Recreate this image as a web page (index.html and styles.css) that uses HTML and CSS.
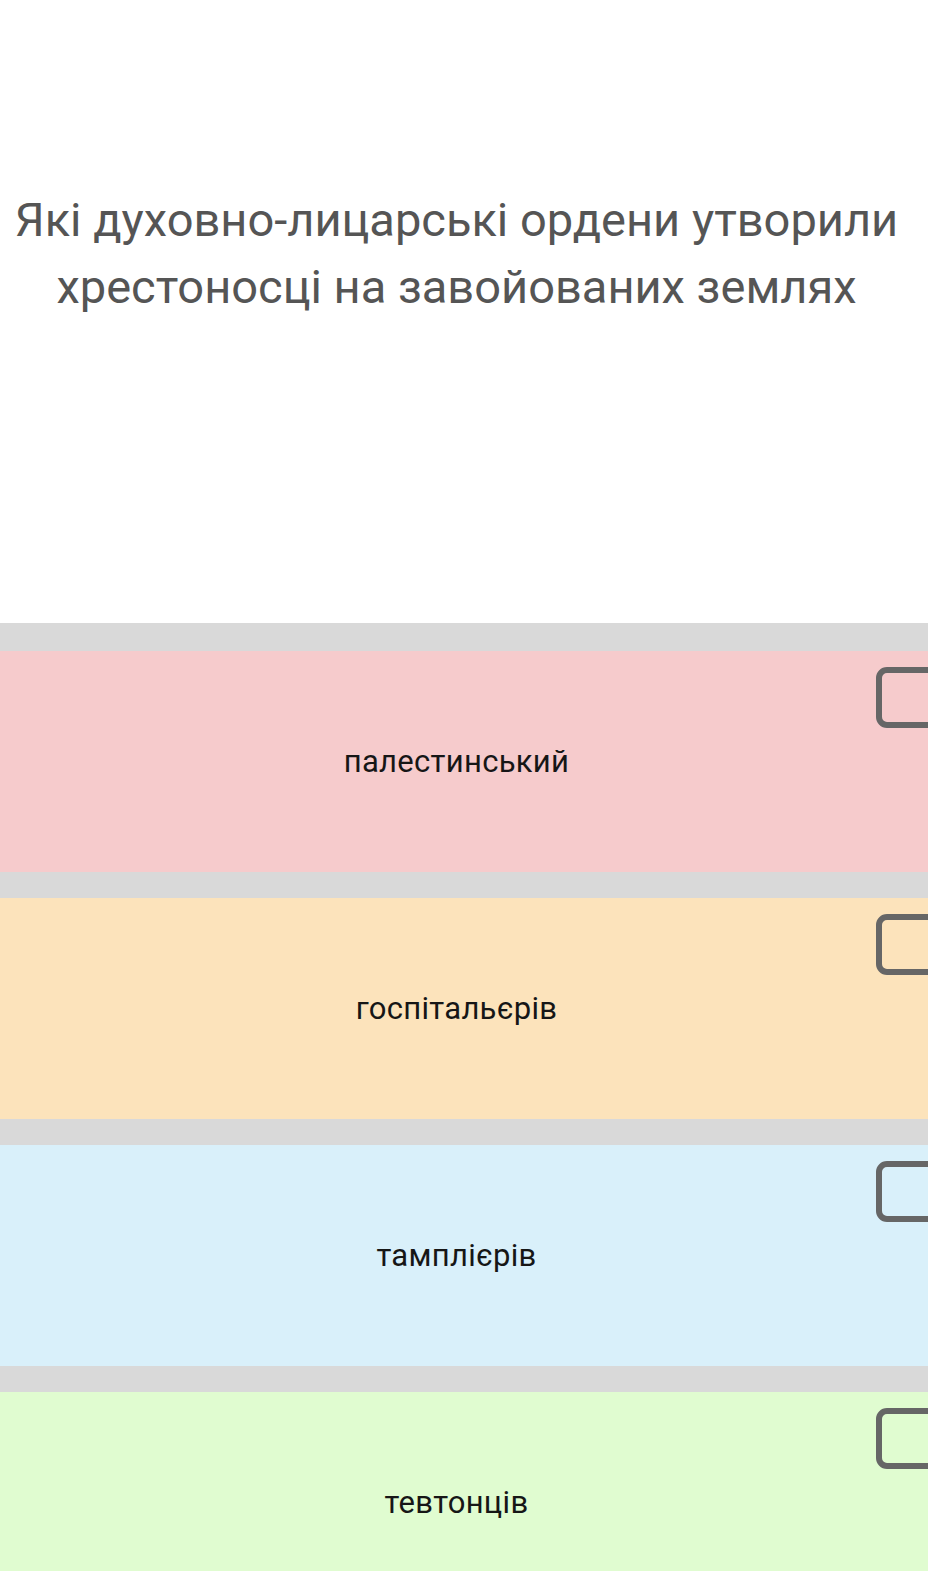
FILE: index.html
```html
<!DOCTYPE html>
<html lang="uk">

<head>
    <meta charset="UTF-8">
    <meta name="viewport" content="width=device-width, initial-scale=1.0">
    <title>Тест</title>
    <link rel="stylesheet" href="styles.css">
</head>

<body>
    <div class="question">
        <h1 class="question_title">Які духовно-лицарські ордени утворили хрестоносці на завойованих землях</h1>
    </div>
    <div class="answers">
        <div class="answer answer--red">
            <span class="answer_check"></span>
            <span class="answer_text">палестинський</span>
        </div>
        <div class="answer answer--orange">
            <span class="answer_check"></span>
            <span class="answer_text">госпітальєрів</span>
        </div>
        <div class="answer answer--blue">
            <span class="answer_check"></span>
            <span class="answer_text">тамплієрів</span>
        </div>
        <div class="answer answer--green">
            <span class="answer_check"></span>
            <span class="answer_text">тевтонців</span>
        </div>
    </div>
</body>

</html>
```

FILE: styles.css
```css
/* Reset some default browser styles */
body,
html {
    margin: 0;
    padding: 0;
    font-family: Roboto, 'Noto Sans', sans-serif;
    background-color: #ffffff;
    overflow: hidden;
}

.question {
    height: 623px;
    box-sizing: border-box;
    padding-top: 186px;
}

.question_title {
    margin: 0;
    padding: 0 15px 0 0;
    font-size: 47px;
    font-weight: 400;
    line-height: 67px;
    text-align: center;
    color: #555555;
}

.answers {
    display: flex;
    flex-direction: column;
    gap: 26px;
    padding-top: 28px;
    background-color: #d9d9d9;
}

.answer {
    position: relative;
    height: 221px;
    padding-right: 15px;
    display: flex;
    justify-content: center;
    align-items: center;
}

.answer--red {
    background-color: #f6cbcc;
}

.answer--orange {
    background-color: #fce3bb;
}

.answer--blue {
    background-color: #d9f0fa;
}

.answer--green {
    background-color: #e0fcd0;
}

.answer_text {
    font-size: 31px;
    color: #161616;
    letter-spacing: 0.3px;
}

.answer_check {
    position: absolute;
    top: 16px;
    left: 876px;
    width: 70px;
    height: 49px;
    border: 6px solid #666666;
    border-radius: 11px;
}
```
